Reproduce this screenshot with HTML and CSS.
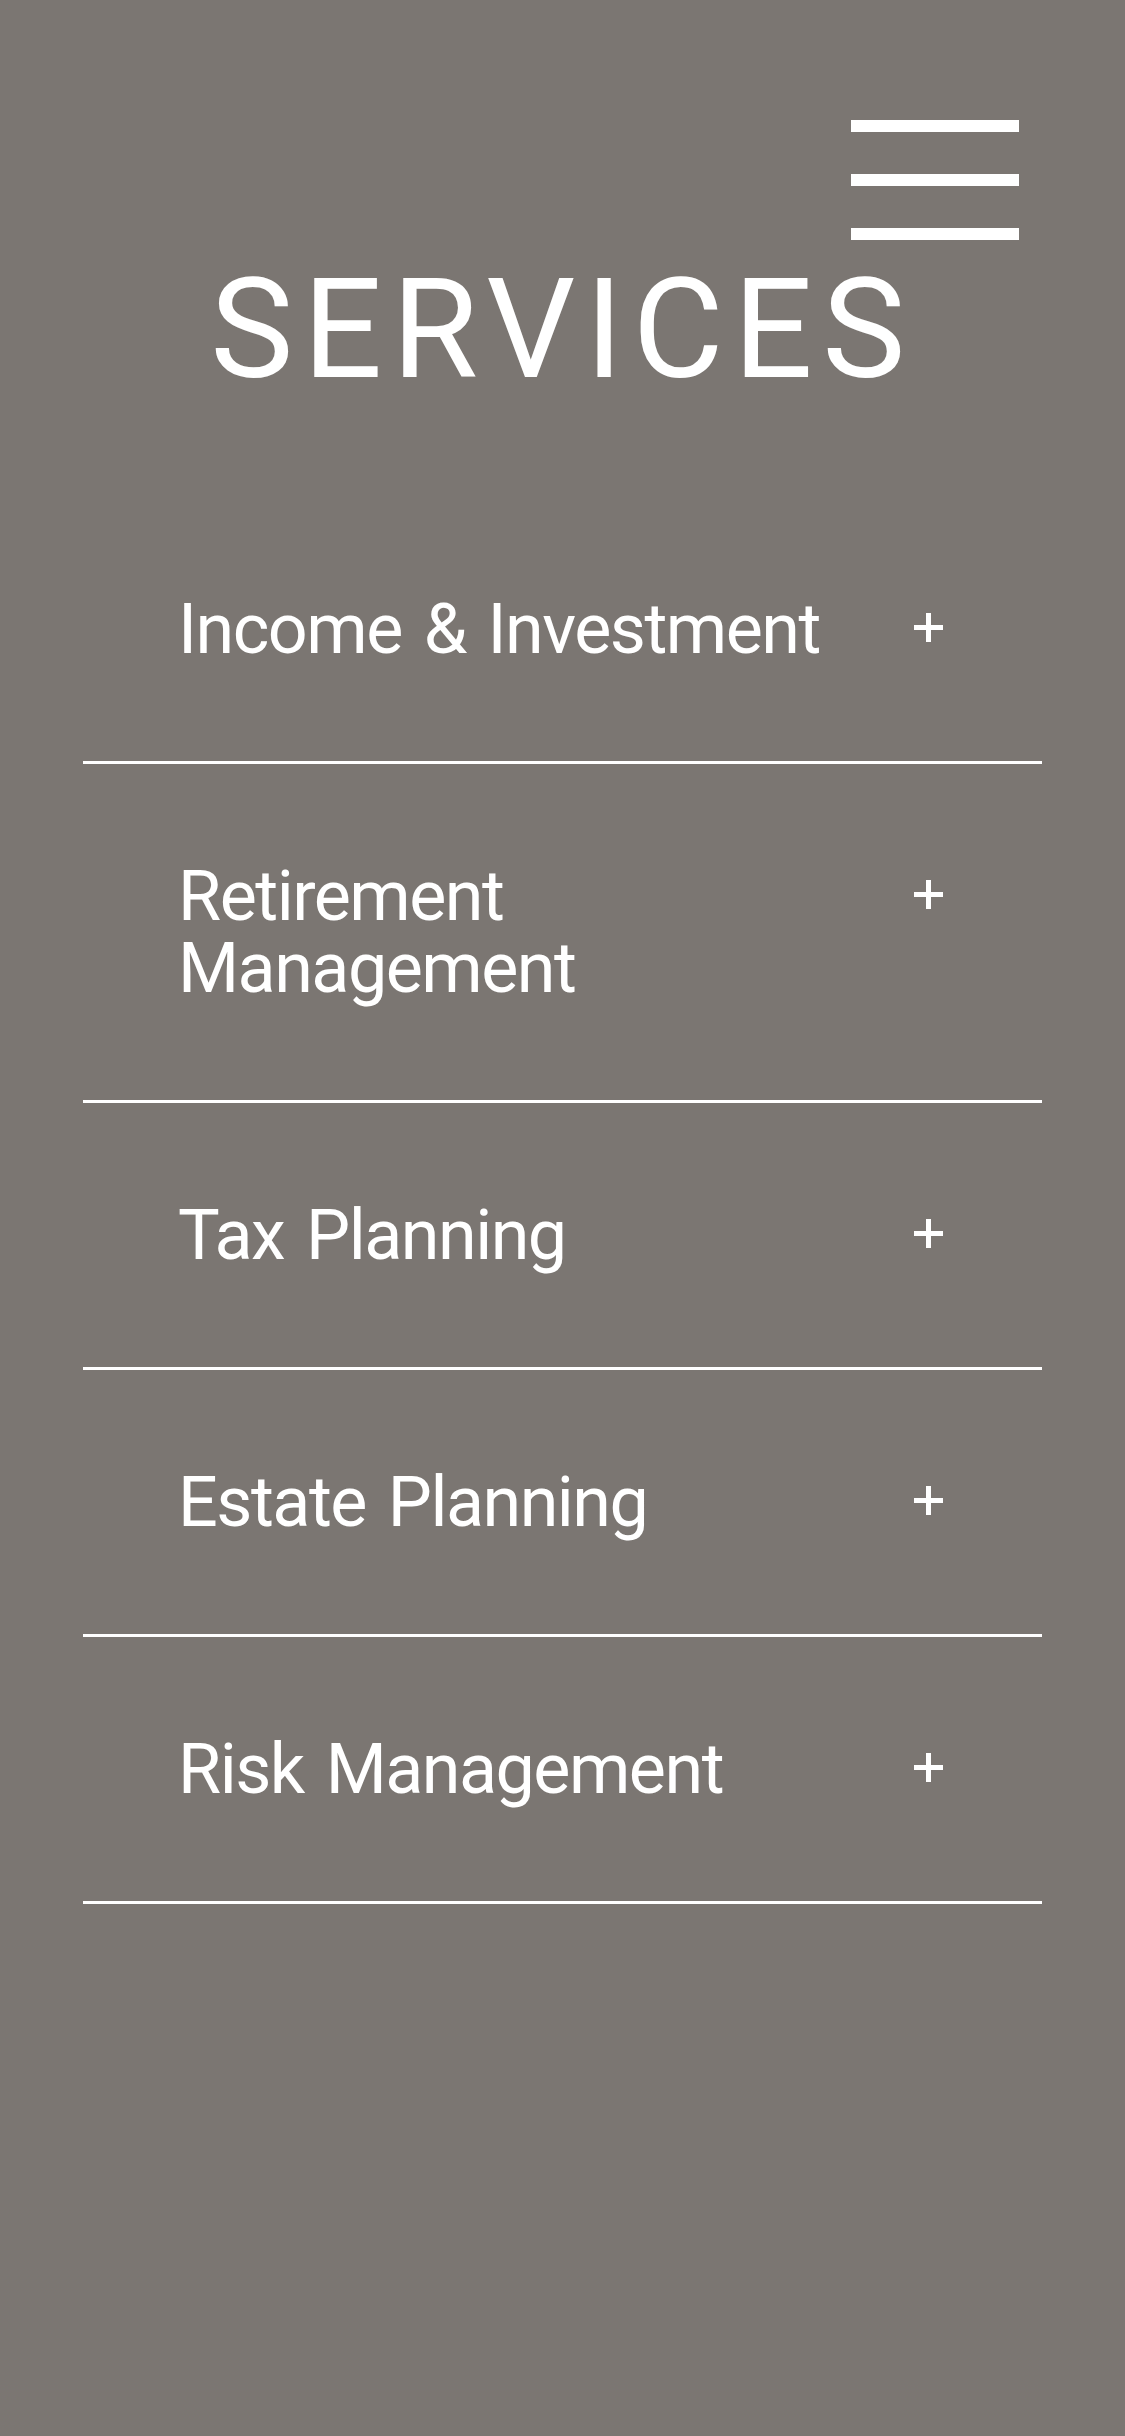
FILE: index.html
```html
<!DOCTYPE html>
<html lang="en">
<head>
<meta charset="utf-8">
<title>Services</title>
<link rel="stylesheet" href="styles.css">
</head>
<body>
<div class="page">
  <header class="topbar">
    <button class="burger" aria-label="Menu"><span></span><span></span><span></span></button>
  </header>
  <h1 class="title">SERVICES</h1>
  <ul class="list">
    <li class="item"><span class="label">Income &amp; Investment</span><svg class="plus" viewBox="0 0 29 29"><rect x="12" y="0" width="5" height="29"/><rect x="0" y="12" width="29" height="5"/></svg></li>
    <li class="item"><span class="label">Retirement<br>Management</span><svg class="plus" viewBox="0 0 29 29"><rect x="12" y="0" width="5" height="29"/><rect x="0" y="12" width="29" height="5"/></svg></li>
    <li class="item"><span class="label">Tax Planning</span><svg class="plus" viewBox="0 0 29 29"><rect x="12" y="0" width="5" height="29"/><rect x="0" y="12" width="29" height="5"/></svg></li>
    <li class="item"><span class="label">Estate Planning</span><svg class="plus" viewBox="0 0 29 29"><rect x="12" y="0" width="5" height="29"/><rect x="0" y="12" width="29" height="5"/></svg></li>
    <li class="item"><span class="label">Risk Management</span><svg class="plus" viewBox="0 0 29 29"><rect x="12" y="0" width="5" height="29"/><rect x="0" y="12" width="29" height="5"/></svg></li>
  </ul>
</div>
</body>
</html>
```
FILE: styles.css
```css
html, body {
  margin: 0;
  padding: 0;
  background: #7b7672;
}
body {
  font-family: Roboto, "Open Sans", sans-serif;
  color: #ffffff;
}
.page {
  min-height: 2436px;
}
.topbar {
  display: flex;
  justify-content: flex-end;
  padding: 120px 106px 0 0;
}
.burger {
  display: flex;
  flex-direction: column;
  gap: 42px;
  width: 168px;
  padding: 0;
  margin: 0;
  border: 0;
  background: transparent;
}
.burger span {
  display: block;
  height: 12px;
  width: 100%;
  background: #ffffff;
}
.title {
  margin: 19px 0 0;
  font-size: 140px;
  line-height: 140px;
  font-weight: 400;
  letter-spacing: 9.5px;
  text-align: center;
}
.list {
  list-style: none;
  margin: 98px 83px 0;
  padding: 0;
}
.item {
  display: flex;
  justify-content: space-between;
  align-items: flex-start;
  padding: 96px 99px 96px 95px;
  border-bottom: 3px solid #ffffff;
}
.label {
  font-size: 70px;
  line-height: 72px;
  letter-spacing: -1.5px;
  word-spacing: 6px;
}
.plus {
  width: 29px;
  height: 29px;
  margin-top: 20px;
  fill: #ffffff;
  flex: none;
}
```
